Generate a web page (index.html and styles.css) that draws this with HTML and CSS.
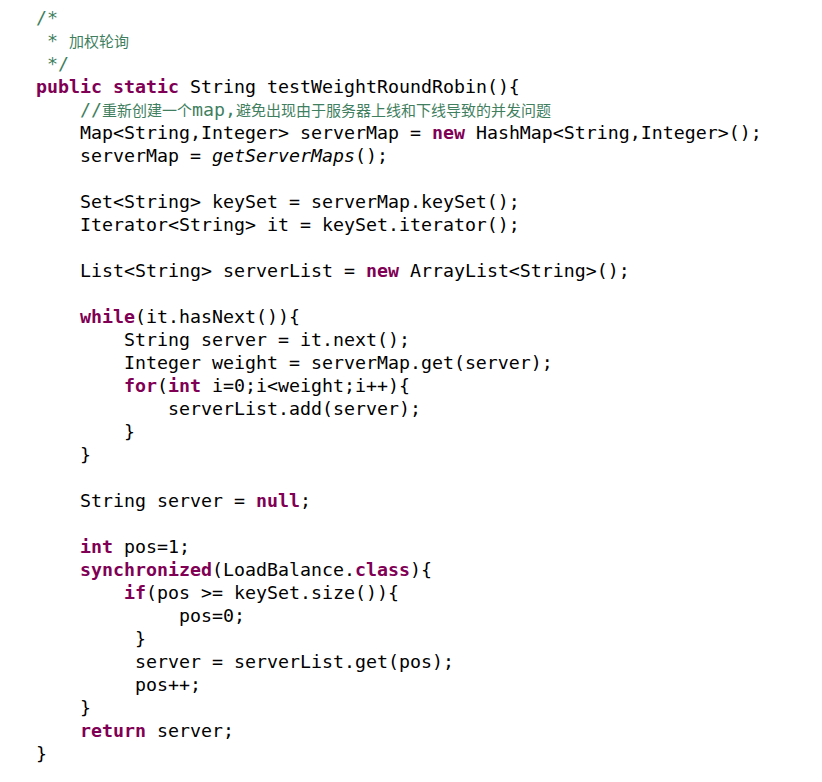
FILE: index.html
```html
<!DOCTYPE html>
<html>
<head>
<meta charset="utf-8">
<link rel="stylesheet" href="styles.css">
</head>
<body>
<div class="code">
<div class="ln c">/*</div>
<div class="ln c"> * <span class="cjk">加权轮询</span></div>
<div class="ln c"> */</div>
<div class="ln"><span class="k">public</span> <span class="k">static</span> String testWeightRoundRobin(){</div>
<div class="ln c">    //<span class="cjk">重新创建一个</span>map,<span class="cjk">避免出现由于服务器上线和下线导致的并发问题</span></div>
<div class="ln">    Map&lt;String,Integer&gt; serverMap = <span class="k">new</span> HashMap&lt;String,Integer&gt;();</div>
<div class="ln">    serverMap = <span class="i">getServerMaps</span>();</div>
<div class="ln"> </div>
<div class="ln">    Set&lt;String&gt; keySet = serverMap.keySet();</div>
<div class="ln">    Iterator&lt;String&gt; it = keySet.iterator();</div>
<div class="ln"> </div>
<div class="ln">    List&lt;String&gt; serverList = <span class="k">new</span> ArrayList&lt;String&gt;();</div>
<div class="ln"> </div>
<div class="ln">    <span class="k">while</span>(it.hasNext()){</div>
<div class="ln">        String server = it.next();</div>
<div class="ln">        Integer weight = serverMap.get(server);</div>
<div class="ln">        <span class="k">for</span>(<span class="k">int</span> i=0;i&lt;weight;i++){</div>
<div class="ln">            serverList.add(server);</div>
<div class="ln">        }</div>
<div class="ln">    }</div>
<div class="ln"> </div>
<div class="ln">    String server = <span class="k">null</span>;</div>
<div class="ln"> </div>
<div class="ln">    <span class="k">int</span> pos=1;</div>
<div class="ln">    <span class="k">synchronized</span>(LoadBalance.<span class="k">class</span>){</div>
<div class="ln">        <span class="k">if</span>(pos &gt;= keySet.size()){</div>
<div class="ln">             pos=0;</div>
<div class="ln">         }</div>
<div class="ln">         server = serverList.get(pos);</div>
<div class="ln">         pos++;</div>
<div class="ln">    }</div>
<div class="ln">    <span class="k">return</span> server;</div>
<div class="ln">}</div>
</div>
</body>
</html>
```
FILE: styles.css
```css
html, body {
  margin: 0;
  padding: 0;
  background: #ffffff;
}
.code {
  padding: 6px 0 0 36px;
  font-family: "DejaVu Sans Mono", "Liberation Mono", monospace;
  font-size: 18.27px;
  color: #000000;
}
.ln {
  height: 23px;
  line-height: 23px;
  white-space: pre;
  overflow: hidden;
}
.k {
  color: #7f0055;
  font-weight: bold;
}
.c {
  color: #3f7f5f;
}
.i {
  font-style: italic;
}
.cjk {
  font-family: "Noto Sans CJK SC", sans-serif;
  font-size: 15px;
  line-height: 1;
}
```
